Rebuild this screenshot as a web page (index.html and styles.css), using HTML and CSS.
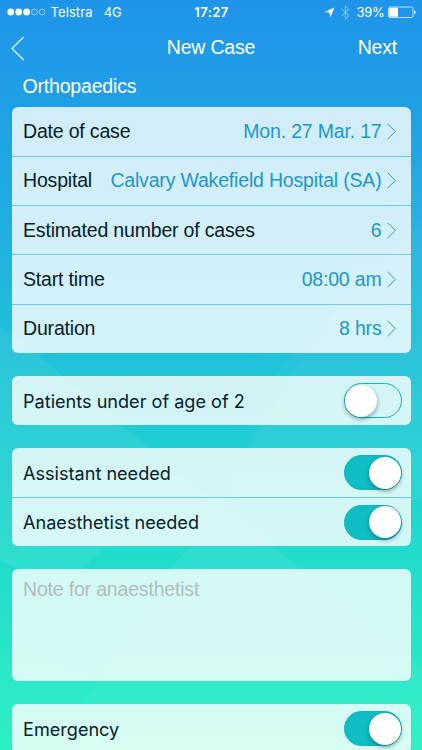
FILE: index.html
```
<!DOCTYPE html>
<html lang="en">
<head>
    <meta charset="utf-8">
    <title>New Case</title>
    <meta name="viewport" content="width=device-width, initial-scale=1">
    <link rel="stylesheet" href="styles.css">
</head>
<body>
    <!-- faceted background -->
    <svg class="backdrop" viewBox="0 0 422 750" aria-hidden="true">
        <polygon points="0,327 35,353 63,376 140,440 211,500 273,547 105,547 60,590 0,560" />
        <polygon points="422,154 422,500 215,500 247,448 275,376 340,290" class="faint" />
        <polygon points="422,222 422,500 230,500 253,440 306,353 340,305" class="faint" />
        <polygon points="190,547 273,547 300,569 400,650 422,668 422,750 60,750 97,681 170,569" />
        <polygon points="0,652 10,645 97,681 60,750 0,750" class="faint" />
    </svg>

    <header class="status-bar">
        <div class="status-left">
            <svg class="signal" width="39" height="8" viewBox="0 0 39 8">
                <circle cx="3.7" cy="4" r="3.4" />
                <circle cx="11.7" cy="4" r="3.4" />
                <circle cx="19.6" cy="4" r="3.4" />
                <circle cx="27.4" cy="4" r="2.9" class="empty" />
                <circle cx="35.2" cy="4" r="2.9" class="empty" />
            </svg>
            <span class="carrier">Telstra</span>
            <span class="network">4G</span>
        </div>
        <span class="clock">17:27</span>
        <div class="status-right">
            <svg width="11" height="11" viewBox="0 0 11 11">
                <path d="M10.5 .5 L6.3 10.3 L5.5 5.6 L.5 5 Z" fill="#fff" />
            </svg>
            <svg class="bluetooth" width="9" height="15" viewBox="0 0 9 15">
                <path d="M.7 4 L8 10.6 L4.5 14 V1 L8 4.3 L.7 11" />
            </svg>
            <span class="percent">39%</span>
            <svg class="battery" width="28" height="13" viewBox="0 0 28 13">
                <rect x=".5" y="1" width="24.5" height="10.5" rx="1.5" fill="none" stroke="#bde0fb" />
                <rect x="1.3" y="1.8" width="8.7" height="8.9" fill="#fff" />
                <path d="M26 4.3 Q27.6 4.6 27.6 6.2 Q27.6 7.9 26 8.2 Z" fill="#d8eefd" />
            </svg>
        </div>
    </header>

    <nav class="nav-bar">
        <a class="back" href="#" aria-label="Back">
            <svg width="14" height="25" viewBox="0 0 14 25">
                <path d="M12.7 1 L1 12.5 L12.7 24" />
            </svg>
        </a>
        <h1>New Case</h1>
        <a class="next" href="#">Next</a>
    </nav>

    <main>
        <h2>Orthopaedics</h2>

        <section class="card details">
            <div class="row">
                <span class="label">Date of case</span>
                <span class="value">Mon. 27 Mar. 17</span>
                <svg class="chevron" viewBox="0 0 9 17"><path d="M.5 .7 L8.3 8.5 L.5 16.3" /></svg>
            </div>
            <div class="row">
                <span class="label">Hospital</span>
                <span class="value">Calvary Wakefield Hospital (SA)</span>
                <svg class="chevron" viewBox="0 0 9 17"><path d="M.5 .7 L8.3 8.5 L.5 16.3" /></svg>
            </div>
            <div class="row">
                <span class="label">Estimated number of cases</span>
                <span class="value">6</span>
                <svg class="chevron" viewBox="0 0 9 17"><path d="M.5 .7 L8.3 8.5 L.5 16.3" /></svg>
            </div>
            <div class="row">
                <span class="label">Start time</span>
                <span class="value">08:00 am</span>
                <svg class="chevron" viewBox="0 0 9 17"><path d="M.5 .7 L8.3 8.5 L.5 16.3" /></svg>
            </div>
            <div class="row">
                <span class="label">Duration</span>
                <span class="value">8 hrs</span>
                <svg class="chevron" viewBox="0 0 9 17"><path d="M.5 .7 L8.3 8.5 L.5 16.3" /></svg>
            </div>
        </section>

        <section class="card options">
            <label class="row">
                <span class="label">Patients under of age of 2</span>
                <input class="switch" type="checkbox">
            </label>
        </section>

        <section class="card options">
            <label class="row">
                <span class="label">Assistant needed</span>
                <input class="switch" type="checkbox" checked>
            </label>
            <label class="row">
                <span class="label">Anaesthetist needed</span>
                <input class="switch" type="checkbox" checked>
            </label>
        </section>

        <textarea class="card note" placeholder="Note for anaesthetist"></textarea>

        <section class="card options">
            <label class="row">
                <span class="label">Emergency</span>
                <input class="switch" type="checkbox" checked>
            </label>
        </section>
    </main>
</body>
</html>
```
FILE: styles.css
```
* {
    box-sizing: border-box;
}
body {
    position: relative;
    height: 750px;
    margin: 0;
    overflow: hidden;
    font-family: "Liberation Sans", Arial, sans-serif;
    font-size: 19.5px;
    letter-spacing: -0.18px;
    color: #06202c;
    background: linear-gradient(#1f95ea 0, #1f9fe6 100px, #20aee0 220px, #20c3d8 365px, #20cdd4 440px, #22dccb 560px, #25eac5 690px, #26f0bf 750px);
}
.backdrop {
    position: absolute;
    top: 0;
    left: 0;
    width: 422px;
    height: 750px;
    z-index: -1;
    fill: rgba(255, 255, 255, 0.06);
}
.backdrop .faint {
    fill: rgba(255, 255, 255, 0.03);
}

/* status bar */
.status-bar {
    display: grid;
    grid-template-columns: 1fr auto 1fr;
    align-items: center;
    height: 24px;
    padding: 0 6px 0 7px;
    color: #fff;
    font-family: Inter, sans-serif;
    font-size: 13px;
    letter-spacing: 0;
}
.status-left,
.status-right {
    display: flex;
    align-items: center;
}
.status-right {
    justify-content: flex-end;
}
.signal {
    fill: #fff;
}
.signal .empty {
    fill: none;
    stroke: #b5dcfa;
    stroke-width: 0.8;
}
.carrier {
    margin-left: 4.5px;
    letter-spacing: 0.1px;
}
.network {
    margin-left: 11px;
}
.clock {
    font-weight: 600;
    letter-spacing: 0.4px;
}
.bluetooth {
    margin-left: 6px;
    fill: none;
    stroke: #8fcaf6;
}
.percent {
    margin-left: 7px;
    letter-spacing: -0.3px;
}
.battery {
    margin-left: 3.5px;
}

/* navigation */
.nav-bar {
    display: grid;
    grid-template-columns: 1fr auto 1fr;
    align-items: center;
    height: 48px;
    padding: 0 25px 0 11px;
}
.nav-bar a {
    color: #fff;
    text-decoration: none;
}
.back svg {
    display: block;
    fill: none;
    stroke: #e8f6ff;
    stroke-width: 1.2;
}
h1,
h2 {
    margin: 0;
    font-size: inherit;
    font-weight: normal;
    color: #fff;
}
.nav-bar h1 {
    padding-left: 14px;
}
.nav-bar h1,
.nav-bar .next {
    padding-bottom: 1px;
}
.next {
    justify-self: end;
}
main {
    display: flex;
    flex-direction: column;
    gap: 23px;
    padding: 0 11.5px;
}
h2 {
    height: 34.5px;
    margin-bottom: -23px;
    padding-left: 11px;
    line-height: 29px;
}

/* cards */
.card {
    flex-shrink: 0;
    border: 0;
    border-radius: 6px;
    background: rgba(255, 255, 255, 0.8);
}
.row {
    display: flex;
    align-items: center;
    height: 49.3px;
    padding: 0 15px 0 11.5px;
    white-space: nowrap;
}
.row + .row {
    border-top: 1px solid rgba(40, 175, 215, 0.6);
}
.value {
    margin-left: auto;
    color: #2196cb;
}
.chevron {
    width: 9px;
    height: 17px;
    margin-left: 5px;
    fill: none;
    stroke: #2b9ccd;
}
.options .row {
    height: 49.1px;
    padding-right: 9px;
    font-family: Inter, sans-serif;
    font-size: 18.1px;
    letter-spacing: 0;
}

/* switches */
.switch {
    display: flex;
    align-items: center;
    width: 58px;
    height: 35px;
    margin: 0 0 0 auto;
    padding: 0;
    appearance: none;
    border: 1.5px solid #14b3b9;
    border-radius: 18px;
}
.switch::before {
    content: "";
    width: 32px;
    height: 32px;
    flex-shrink: 0;
    border-radius: 50%;
    background: #fff;
    box-shadow: 0 2px 4px rgba(0, 50, 60, 0.45);
}
.switch:checked {
    justify-content: flex-end;
    background: #11bdc5;
}
.note {
    display: block;
    height: 112px;
    padding: 9px 11.5px;
    font: inherit;
    letter-spacing: inherit;
    resize: none;
}
.note::placeholder {
    color: #b1bdbc;
}
```
